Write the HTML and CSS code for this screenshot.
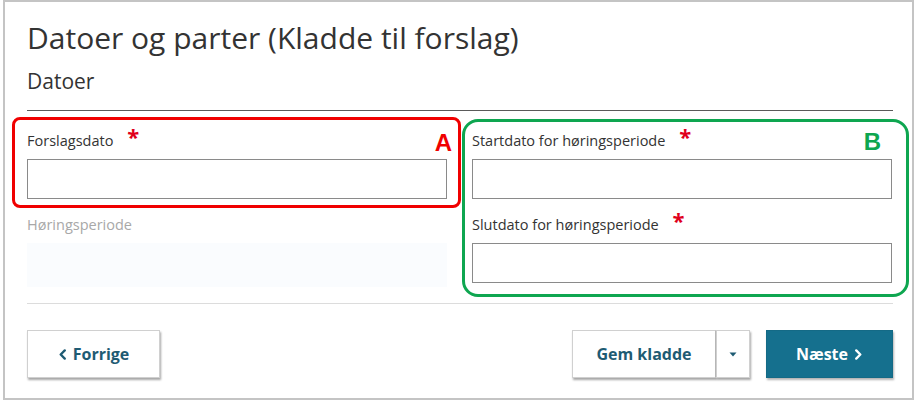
FILE: index.html
```html
<!DOCTYPE html>
<html lang="da">
<head>
<meta charset="utf-8">
<title>Datoer og parter</title>
<link rel="stylesheet" href="styles.css">
</head>
<body>
<div class="frame">
  <h1 class="title">Datoer og parter (Kladde til forslag)</h1>
  <h2 class="subtitle">Datoer</h2>
  <hr class="rule-dark">
  <div class="form-grid">
    <div class="col">
      <div class="field">
        <label class="label">Forslagsdato <span class="req">*</span></label>
        <div class="input"></div>
      </div>
      <div class="field">
        <label class="label disabled">Høringsperiode</label>
        <div class="input ghost"></div>
      </div>
    </div>
    <div class="col">
      <div class="field">
        <label class="label">Startdato for høringsperiode <span class="req">*</span></label>
        <div class="input"></div>
      </div>
      <div class="field">
        <label class="label">Slutdato for høringsperiode <span class="req">*</span></label>
        <div class="input"></div>
      </div>
    </div>
  </div>
  <hr class="rule-light">
  <div class="actions">
    <button class="btn btn-default btn-prev">
      <svg class="chev" viewBox="0 0 10 12" width="9" height="11"><path d="M7.5 1.5 L3 6 L7.5 10.5" fill="none" stroke="currentColor" stroke-width="2.6" stroke-linecap="round" stroke-linejoin="round"/></svg>
      Forrige
    </button>
    <div class="right-actions">
      <div class="split">
        <button class="btn btn-default btn-save">Gem kladde</button>
        <button class="btn btn-default btn-caret"><svg viewBox="0 0 8 5" width="8" height="5"><path d="M0.5 0.5 L7.5 0.5 L4 4.5 Z" fill="currentColor"/></svg></button>
      </div>
      <button class="btn btn-primary btn-next">
        Næste
        <svg class="chev" viewBox="0 0 10 12" width="9" height="11"><path d="M2.5 1.5 L7 6 L2.5 10.5" fill="none" stroke="currentColor" stroke-width="2.6" stroke-linecap="round" stroke-linejoin="round"/></svg>
      </button>
    </div>
  </div>

  <div class="annot annot-a"><span class="annot-letter">A</span></div>
  <div class="annot annot-b"><span class="annot-letter">B</span></div>
</div>
</body>
</html>
```

FILE: styles.css
```css
* { box-sizing: border-box; }
html, body { margin: 0; padding: 0; background: #ffffff; }
body { font-family: "Open Sans", "Liberation Sans", sans-serif; color: #333; }

.frame {
  position: relative;
  margin: 0 3px 0 3px;
  height: 400px;
  border: 2px solid #c4c4c4;
  padding: 16px 19px 0 22px;
}

.title {
  margin: 0;
  font-weight: 400;
  font-size: 30px;
  line-height: 40px;
  color: #333;
  letter-spacing: 0;
}

.subtitle {
  margin: 9px 0 0 0;
  font-weight: 400;
  font-size: 21px;
  line-height: 28px;
  color: #333;
}

.rule-dark {
  margin: 15px 0 0 0;
  border: 0;
  border-top: 1px solid #5a5a5a;
  height: 0;
}

.form-grid {
  display: grid;
  grid-template-columns: 420px 420px;
  column-gap: 25px;
  padding-top: 19px;
}

.col { display: flex; flex-direction: column; gap: 15px; }

.field { display: flex; flex-direction: column; }

.label {
  font-size: 14.5px;
  line-height: 22px;
  color: #333;
  margin-bottom: 7px;
}
.label.disabled { color: #a8a8a8; }

.req {
  color: #e0001b;
  font-size: 22px;
  font-weight: 700;
  margin-left: 10px;
  position: relative;
  top: -1px;
  line-height: 0;
}

.input {
  height: 40px;
  border: 1px solid #8a8a8a;
  background: #fff;
}
.input.ghost {
  border: 0;
  background: #fafcfe;
  height: 44px;
}

.rule-light {
  margin: 16px 0 0 0;
  border: 0;
  border-top: 1px solid #dcdcdc;
  height: 0;
}

.actions {
  display: flex;
  justify-content: space-between;
  align-items: center;
  padding-top: 26px;
}

.right-actions { display: flex; gap: 16px; }

.split { display: flex; }

.btn {
  height: 48px;
  font-family: "Open Sans", "Liberation Sans", sans-serif;
  font-weight: 700;
  font-size: 16px;
  display: inline-flex;
  align-items: center;
  justify-content: center;
  gap: 6px;
  cursor: pointer;
  padding: 0;
}

.btn-default {
  background: #fff;
  color: #1e5b73;
  border: 1px solid #d0d0d0;
  box-shadow: 1px 2px 2px rgba(0, 0, 0, 0.35);
}

.btn-prev { width: 133px; }
.btn-save { width: 144px; border-right: 1px solid #bbb; }
.btn-caret { width: 34px; color: #1e5b73; }

.btn-primary {
  background: #15708e;
  color: #fff;
  border: 1px solid #146a86;
  width: 127px;
  box-shadow: 1px 2px 2px rgba(0, 0, 0, 0.3);
}

.chev { display: block; }

.annot {
  position: absolute;
  border-style: solid;
  border-width: 3px;
  pointer-events: none;
}
.annot-a {
  left: 7px;
  top: 115px;
  width: 449px;
  height: 91px;
  border-color: #f00000;
  border-radius: 8px;
}
.annot-b {
  left: 457px;
  top: 117px;
  width: 447px;
  height: 178px;
  border-color: #0ea650;
  border-radius: 16px;
}
.annot-letter {
  position: absolute;
  font-family: "Liberation Sans", Arial, sans-serif;
  font-weight: 700;
  font-size: 24px;
  line-height: 24px;
}
.annot-a .annot-letter { color: #f00000; right: 6px; top: 11px; }
.annot-b .annot-letter { color: #0ea650; right: 25px; top: 8px; }
```
